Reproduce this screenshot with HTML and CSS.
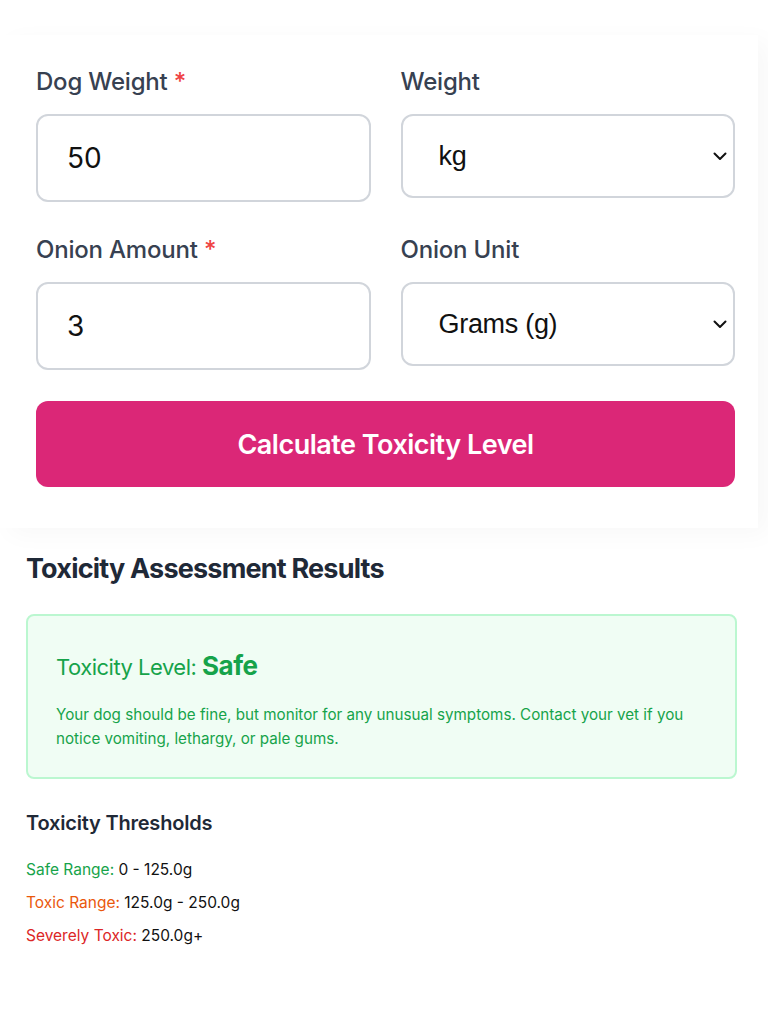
FILE: index.html
```html
<!DOCTYPE html>
<html>
<head>
<meta charset="utf-8">
<link rel="stylesheet" href="styles.css">
</head>
<body>
<div class="card">
  <div class="grid">
    <div class="field">
      <label class="label">Dog Weight <span class="req">*</span></label>
      <input class="input" type="text" value="50">
    </div>
    <div class="field">
      <label class="label">Weight</label>
      <div class="select-wrap">
        <select class="select"><option>kg</option></select>
        <svg class="chev" width="14" height="9" viewBox="0 0 14 9"><path d="M1.5 1.5 L7 7 L12.5 1.5" fill="none" stroke="#111" stroke-width="2" stroke-linecap="round" stroke-linejoin="round"/></svg>
      </div>
    </div>
    <div class="field">
      <label class="label">Onion Amount <span class="req">*</span></label>
      <input class="input" type="text" value="3">
    </div>
    <div class="field">
      <label class="label">Onion Unit</label>
      <div class="select-wrap">
        <select class="select"><option>Grams (g)</option></select>
        <svg class="chev" width="14" height="9" viewBox="0 0 14 9"><path d="M1.5 1.5 L7 7 L12.5 1.5" fill="none" stroke="#111" stroke-width="2" stroke-linecap="round" stroke-linejoin="round"/></svg>
      </div>
    </div>
  </div>
  <button class="btn">Calculate Toxicity Level</button>
</div>

<div class="results">
  <h2 class="res-title">Toxicity Assessment Results</h2>
  <div class="safe-box">
    <div class="level">Toxicity Level: <strong class="level-val">Safe</strong></div>
    <p class="advice">Your dog should be fine, but monitor for any unusual symptoms. Contact your vet if you notice vomiting, lethargy, or pale gums.</p>
  </div>
  <h3 class="th-title">Toxicity Thresholds</h3>
  <div class="th-list">
    <div class="th-row"><span class="c-safe">Safe Range:</span> 0 - 125.0g</div>
    <div class="th-row"><span class="c-toxic">Toxic Range:</span> 125.0g - 250.0g</div>
    <div class="th-row"><span class="c-severe">Severely Toxic:</span> 250.0g+</div>
  </div>
</div>
</body>
</html>
```

FILE: styles.css
```css
* { box-sizing: border-box; }
html, body { margin: 0; padding: 0; background: #fff; }
body { font-family: Inter, "Noto Sans", sans-serif; color: #111827; }

.card {
  margin: 35px 10px 0 0;
  padding: 31px 23px 41px 36px;
  background: #fff;
  box-shadow: 10px 6px 24px rgba(0,0,0,0.03);
}
.grid {
  display: grid;
  grid-template-columns: 1fr 1fr;
  column-gap: 30px;
  row-gap: 32px;
}
.field { display: flex; flex-direction: column; }
.label {
  font-size: 24px;
  font-weight: 500;
  color: #374151;
  letter-spacing: -0.2px;
  line-height: 32px;
  margin-bottom: 16px;
}
.req { color: #ef4444; }
.input, .select {
  width: 100%;
  height: 88px;
  border: 2px solid #d1d5db;
  border-radius: 12px;
  padding: 0 0 0 29px;
  color: #111;
  background: #fff;
  outline: none;
}
.input {
  font-family: Inter, "Noto Sans", sans-serif;
  font-size: 28px;
  font-weight: 400;
}
.select-wrap { position: relative; }
.select {
  height: 84px;
  appearance: none;
  -webkit-appearance: none;
  padding-left: 36px;
  font-family: "Liberation Sans", Arial, sans-serif;
  font-size: 27px;
  letter-spacing: -0.3px;
}
.chev { position: absolute; right: 8px; top: 38px; }

.btn {
  display: block;
  width: 100%;
  margin-top: 31px;
  height: 86px;
  border: 0;
  border-radius: 12px;
  background: #db2777;
  color: #fff;
  font-family: Inter, "Noto Sans", sans-serif;
  font-size: 27px;
  font-weight: 600;
  letter-spacing: -0.5px;
}

.results { padding: 0 31px 0 26px; }
.res-title {
  margin: 23px 0 0;
  font-size: 27px;
  font-weight: 700;
  color: #1f2937;
  letter-spacing: -0.8px;
  line-height: 36px;
}
.safe-box {
  margin-top: 27px;
  background: #f0fdf4;
  border: 2px solid #bbf7d0;
  border-radius: 8px;
  padding: 35px 28px 26px 28px;
}
.level {
  font-size: 22px;
  color: #16a34a;
  letter-spacing: -0.5px;
  line-height: 30px;
}
.level-val { font-size: 26px; font-weight: 700; }
.advice {
  margin: 21px 0 0;
  font-size: 15.2px;
  line-height: 24px;
  color: #16a34a;
  letter-spacing: 0;
}
.th-title {
  margin: 30px 0 0;
  font-size: 20px;
  font-weight: 600;
  color: #1f2937;
  letter-spacing: -0.2px;
  line-height: 28px;
}
.th-list { margin-top: 22px; display: flex; flex-direction: column; gap: 11px; }
.th-row { font-size: 15.5px; line-height: 22px; color: #111; }
.c-safe { color: #16a34a; }
.c-toxic { color: #ea580c; }
.c-severe { color: #dc2626; }
```
